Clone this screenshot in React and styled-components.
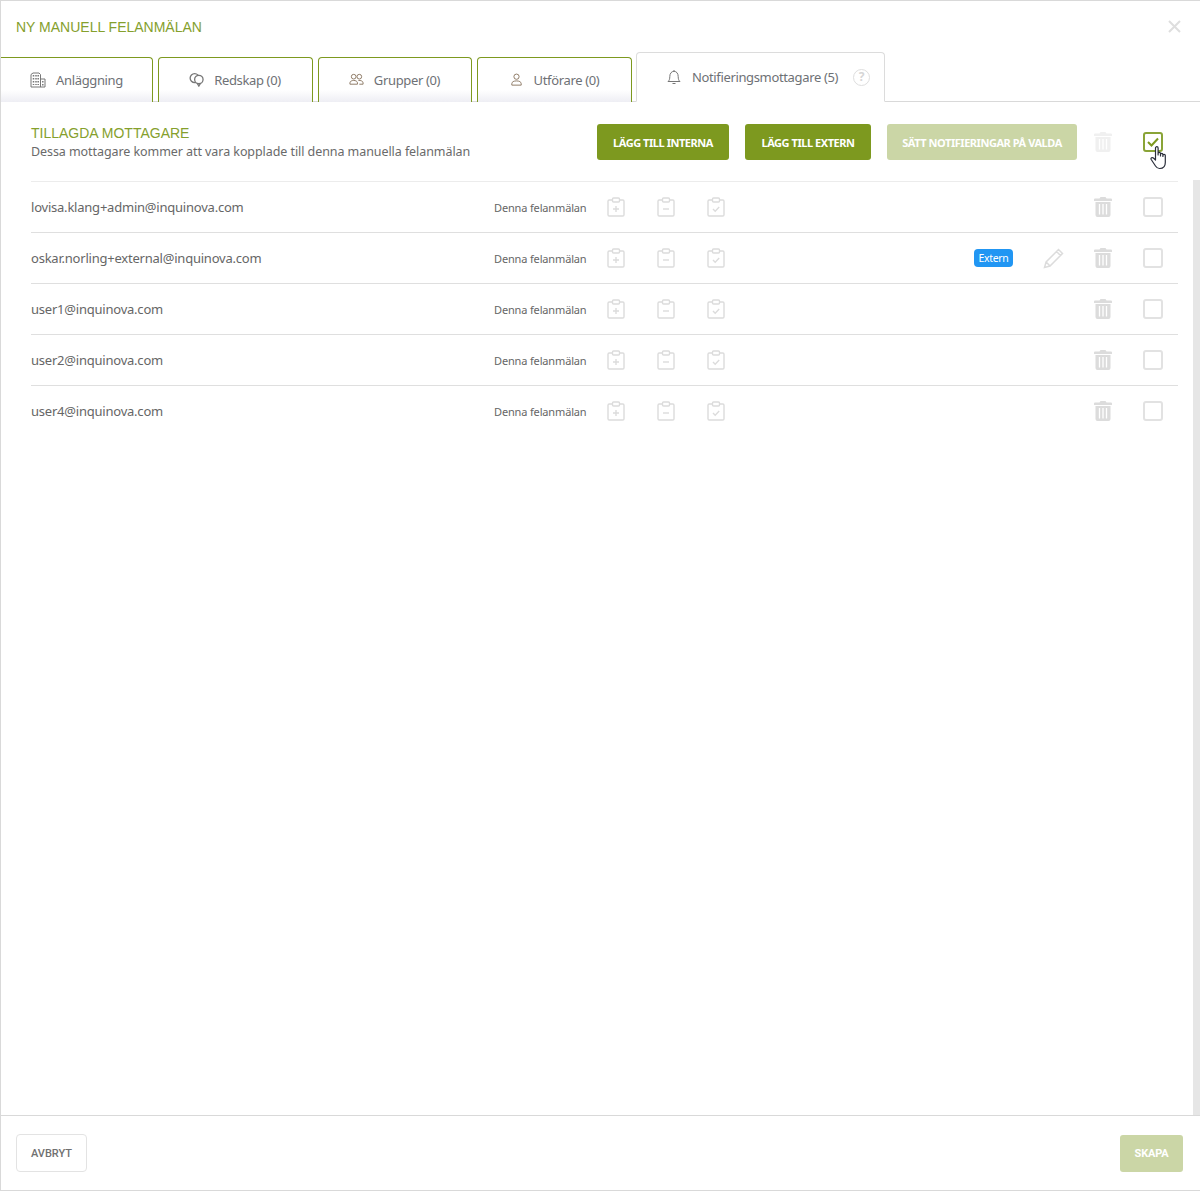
import React from 'react';
import styled, { createGlobalStyle } from 'styled-components';

const GREEN = '#7d991f';
const ICON = '#dcdcdc';

const Global = createGlobalStyle`
  html, body { margin: 0; padding: 0; background: #fff; }
  * { box-sizing: border-box; }
  body { font-family: "Noto Sans", sans-serif; color: #666; }
`;

const Modal = styled.div`
  width: 1200px;
  height: 1191px;
  display: flex;
  flex-direction: column;
  border: 1px solid #d9d9d9;
  border-right: 0;
  background: #fff;
`;

const Header = styled.div`
  height: 51px;
  flex: none;
  display: flex;
  align-items: center;
  justify-content: space-between;
  padding: 0 19px 0 15px;
`;

const ModalTitle = styled.h2`
  margin: 0;
  font: 400 14px "Liberation Sans", Arial, sans-serif;
  color: #85a02d;
  text-transform: uppercase;
`;

const Close = styled.svg`
  width: 13px;
  height: 13px;
  stroke: #dedede;
  stroke-width: 2;
`;

const TabBar = styled.div`
  height: 50px;
  flex: none;
  display: flex;
  align-items: flex-end;
  gap: 5px;
  border-bottom: 1px solid #d9d9d9;
`;

const Tab = styled.div`
  width: ${p => p.$w}px;
  height: ${p => (p.$active ? 50 : 45)}px;
  margin-bottom: -1px;
  margin-left: ${p => (p.$active ? -1 : 0)}px;
  display: flex;
  align-items: center;
  justify-content: center;
  gap: 10px;
  font-size: 13px;
  letter-spacing: -0.35px;
  color: #6e7175;
  padding-bottom: ${p => (p.$active ? 0 : 1)}px;
  padding-left: ${p => (p.$active ? 15 : 0)}px;
  padding-right: ${p => (p.$active || p.$first ? 0 : 1)}px;
  border: 1px solid ${p => (p.$active ? '#dcdcdc' : GREEN)};
  border-bottom: ${p => (p.$active ? '1px solid #fff' : '0')};
  border-radius: 4px 4px 0 0;
  background: ${p => (p.$active ? '#fff' : 'linear-gradient(to bottom, #fff 72%, #eeeef4 100%)')};
  ${p => p.$first && 'border-left: 0; border-top-left-radius: 0;'}
  svg { flex: none; }
`;

const TabIcon = styled.svg`
  width: ${p => p.$size || 16}px;
  height: ${p => p.$size || 16}px;
  fill: none;
  stroke: ${p => p.$stroke || '#777'};
  stroke-width: ${p => p.$weight || 1};
`;

const Help = styled.span`
  width: 17px;
  height: 17px;
  flex: none;
  margin-left: 5px;
  border: 1.5px solid #dedede;
  border-radius: 50%;
  color: #d6d6d6;
  font: 700 12px/14px "Noto Sans", sans-serif;
  letter-spacing: 0;
  text-align: center;
`;

const Content = styled.div`
  flex: 1;
  min-height: 0;
  position: relative;
  padding-right: 22px;
  padding-left: 30px;
  background: linear-gradient(to right, #fff 1192px, #e6e6e6 1192px);
  background-size: 100% calc(100% - 78px);
  background-position: 0 100%;
  background-repeat: no-repeat;
`;

const Toolbar = styled.div`
  height: 80px;
  display: flex;
  padding-top: 22px;
  border-bottom: 1px solid #ececec;
`;

const Intro = styled.div`
  flex: 1;
  padding-top: 1px;
`;

const SectionTitle = styled.div`
  font: 400 14px/17px "Liberation Sans", Arial, sans-serif;
  margin-bottom: 1px;
  color: #85a02d;
  text-transform: uppercase;
`;

const Subtitle = styled.div`
  font-size: 12.5px;
  line-height: 17px;
  letter-spacing: -0.07px;
  color: #6a6a6a;
`;

const Button = styled.button`
  height: 36px;
  width: ${p => p.$w}px;
  margin-right: ${p => p.$gap || 0}px;
  border: 0;
  border-radius: 3px;
  background: ${p => (p.$disabled ? '#cbd6a6' : GREEN)};
  color: #fff;
  font: 700 11px "Noto Sans", sans-serif;
  letter-spacing: -0.45px;
  text-transform: uppercase;
  padding: 0;
`;

const Cell = styled.div`
  width: 50px;
  height: ${p => p.$h || 50}px;
  flex: none;
  grid-column: ${p => p.$col || 'auto'};
  display: flex;
  align-items: center;
  justify-content: center;
  position: relative;
`;

const Check = styled.span`
  width: 20px;
  height: 20px;
  display: flex;
  align-items: center;
  justify-content: center;
  border: 2px solid ${p => (p.$on ? '#8aa437' : '#e2e2e2')};
  border-radius: 3px;
  background: #fff;
`;

const Hand = styled.svg`
  position: absolute;
  left: 22px;
  top: 22px;
  width: 19px;
  height: 24px;
`;

const Row = styled.div`
  height: 51px;
  display: grid;
  grid-template-columns: 463px 92px 5px 50px 50px 50px 1fr 40px 15px 50px 50px 50px;
  align-items: center;
  border-bottom: 1px solid ${p => (p.$last ? 'transparent' : '#dfdfdf')};
`;

const Email = styled.div`
  font-size: 13px;
  letter-spacing: -0.22px;
  color: #666;
`;

const Scope = styled.div`
  font: 400 11px "Noto Sans", sans-serif;
  letter-spacing: -0.15px;
  padding-top: 1px;
  white-space: nowrap;
  color: #666;
`;

const Badge = styled.span`
  grid-column: 8;
  justify-self: end;
  width: 39px;
  height: 18px;
  border-radius: 4px;
  background: #2196f3;
  color: #fff;
  font: 400 10.5px/18px "Noto Sans", sans-serif;
  letter-spacing: -0.3px;
  text-align: center;
`;

const Footer = styled.div`
  height: 75px;
  flex: none;
  display: flex;
  align-items: center;
  justify-content: space-between;
  padding: 0 17px 0 15px;
  border-top: 1px solid #d9d9d9;
  background: #fff;
`;

const Cancel = styled.button`
  width: 71px;
  height: 38px;
  border: 1px solid #e3e3e3;
  border-radius: 4px;
  background: #fff;
  color: #707070;
  font: 500 11px Roboto, sans-serif;
  padding: 1px 0 0;
`;

const Save = styled.button`
  width: 63px;
  height: 37px;
  border: 0;
  border-radius: 3px;
  background: #cbd6a6;
  color: #fff;
  font: 700 11px Roboto, sans-serif;
  letter-spacing: -0.2px;
  padding: 1px 0 0;
`;

const Clipboard = ({ kind }) => (
  <svg width="18" height="20" viewBox="0 0 18 20" fill="none" stroke={ICON} strokeWidth="1.4">
    <path d="M5.500 3H2.200A1.200 1.200 0 0 0 1 4.200v13.600A1.200 1.200 0 0 0 2.200 19h13.600a1.200 1.200 0 0 0 1.200-1.200V4.200A1.200 1.200 0 0 0 15.800 3H12.500" />
    <rect x="5.500" y="1" width="7" height="4" rx="1" />
    {kind === 'plus' && <path d="M9 9v6M6 12h6" />}
    {kind === 'minus' && <path d="M6 12h6" />}
    {kind === 'check' && <path d="M6 12l2.200 2.200L12.200 10" />}
  </svg>
);

const Trash = ({ color = ICON }) => (
  <svg width="18" height="20" viewBox="0 0 18 20">
    <path fill={color} d="M6.500 0h5l1 1.500H17a1 1 0 0 1 1 1V4H0V2.500a1 1 0 0 1 1-1h4.500zM1.500 5h15v13a2 2 0 0 1-2 2h-11a2 2 0 0 1-2-2z" />
    <path stroke="#fff" strokeWidth="1.300" d="M5.500 7v10.500M9 7v10.500M12.500 7v10.500" />
  </svg>
);

const Pencil = () => (
  <svg width="22" height="22" viewBox="0 0 22 22" fill="none" stroke={ICON} strokeWidth="1.500">
    <path d="M2.500 20.500l1.600-5.500L16.500 2.500l4 4L8 19zM4.100 15L8 19M14.500 4.500l4 4" />
  </svg>
);

const Tick = ({ color }) => (
  <svg width="12" height="10" viewBox="0 0 12 10" fill="none" stroke={color} strokeWidth="2">
    <path d="M1 5l3.500 3.500L11 1.500" />
  </svg>
);

const rows = [
  { email: 'lovisa.klang+admin@inquinova.com' },
  { email: 'oskar.norling+external@inquinova.com', external: true },
  { email: 'user1@inquinova.com' },
  { email: 'user2@inquinova.com' },
  { email: 'user4@inquinova.com' },
];

export default function App() {
  return (
    <Modal>
      <Global />
      <Header>
        <ModalTitle>Ny manuell felanmälan</ModalTitle>
        <Close viewBox="0 0 13 13"><path d="M1 1l11 11M12 1L1 12" /></Close>
      </Header>
      <TabBar>
        <Tab $w={152} $first>
          <TabIcon viewBox="0 0 16 16">
            <path d="M1 15V2.500L3 1h6l1.500 1.500V15M1 15h14M10.500 7H15v8" />
            <path strokeDasharray="1.500 1.500" strokeWidth="1.500" d="M3.500 3v10M6 3v10M8.200 3v10M12.800 9v5" />
          </TabIcon>
          Anläggning
        </Tab>
        <Tab $w={155}>
          <TabIcon viewBox="0 0 16 16" $size={15} $weight={1.4}>
            <circle cx="6" cy="6.500" r="4.800" />
            <circle cx="10.500" cy="8" r="4.500" fill="#fff" />
            <path d="M9 12.500l1.500 2.500 1.500-2.500" />
          </TabIcon>
          Redskap (0)
        </Tab>
        <Tab $w={154}>
          <TabIcon viewBox="0 0 16 16" $size={15} $stroke="#8a7560">
            <circle cx="5" cy="5" r="2.500" />
            <circle cx="11" cy="5" r="2.500" />
            <path d="M1 13v-1.500C1 10 3 9 5 9s4 1 4 2.500V13zM10 9c2.500-.3 5 .8 5 2.500V13h-4" />
          </TabIcon>
          Grupper (0)
        </Tab>
        <Tab $w={155}>
          <TabIcon viewBox="0 0 16 16" $size={15} $stroke="#8a7560">
            <circle cx="8" cy="5" r="2.800" />
            <path d="M3 14v-1.500C3 10.500 5 9.500 8 9.500s5 1 5 3V14z" />
          </TabIcon>
          Utförare (0)
        </Tab>
        <Tab $w={249} $active>
          <TabIcon viewBox="0 0 16 16">
            <path d="M2 12.500c1.300-1 1.800-2.500 1.800-5C3.800 4.500 5.500 2.300 8 2.300s4.200 2.200 4.200 5.200c0 2.500.5 4 1.800 5zM6.500 14.500h3M8 1v1.300" />
          </TabIcon>
          Notifieringsmottagare (5)
          <Help>?</Help>
        </Tab>
      </TabBar>
      <Content>
        <Toolbar>
          <Intro>
            <SectionTitle>Tillagda mottagare</SectionTitle>
            <Subtitle>Dessa mottagare kommer att vara kopplade till denna manuella felanmälan</Subtitle>
          </Intro>
          <Button $w={132} $gap={16}>Lägg till interna</Button>
          <Button $w={126} $gap={16}>Lägg till extern</Button>
          <Button $w={190} $gap={1} $disabled>Sätt notifieringar på valda</Button>
          <Cell $h={36}><Trash color="#f0f0f0" /></Cell>
          <Cell $h={36}>
            <Check $on><Tick color="#7d991f" /></Check>
            <Hand viewBox="0 0 19 24">
              <path fill="#fff" stroke="#2a2e3a" strokeWidth="1.200" strokeLinejoin="round" d="M5.500 2a1.300 1.300 0 0 1 2.600 0v7V7.500a1.200 1.200 0 0 1 2.400 0V10V8.500a1.200 1.200 0 0 1 2.400 0V10.500V9.500a1.200 1.200 0 0 1 2.400 0v7c0 3.500-2 6-5.500 6H9.500c-2 0-3-1-4-2.500L1.200 13.500c-.8-1.300 1-2.600 2.200-1.500l2.100 2z" />
            </Hand>
          </Cell>
        </Toolbar>
        {rows.map((row, i) => (
          <Row key={row.email} $last={i === rows.length - 1}>
            <Email>{row.email}</Email>
            <Scope>Denna felanmälan</Scope>
            <Cell $col={4}><Clipboard kind="plus" /></Cell>
            <Cell><Clipboard kind="minus" /></Cell>
            <Cell><Clipboard kind="check" /></Cell>
            {row.external && <Badge>Extern</Badge>}
            {row.external && <Cell $col={10}><Pencil /></Cell>}
            <Cell $col={11}><Trash /></Cell>
            <Cell $col={12}><Check /></Cell>
          </Row>
        ))}
      </Content>
      <Footer>
        <Cancel>AVBRYT</Cancel>
        <Save>SKAPA</Save>
      </Footer>
    </Modal>
  );
}
